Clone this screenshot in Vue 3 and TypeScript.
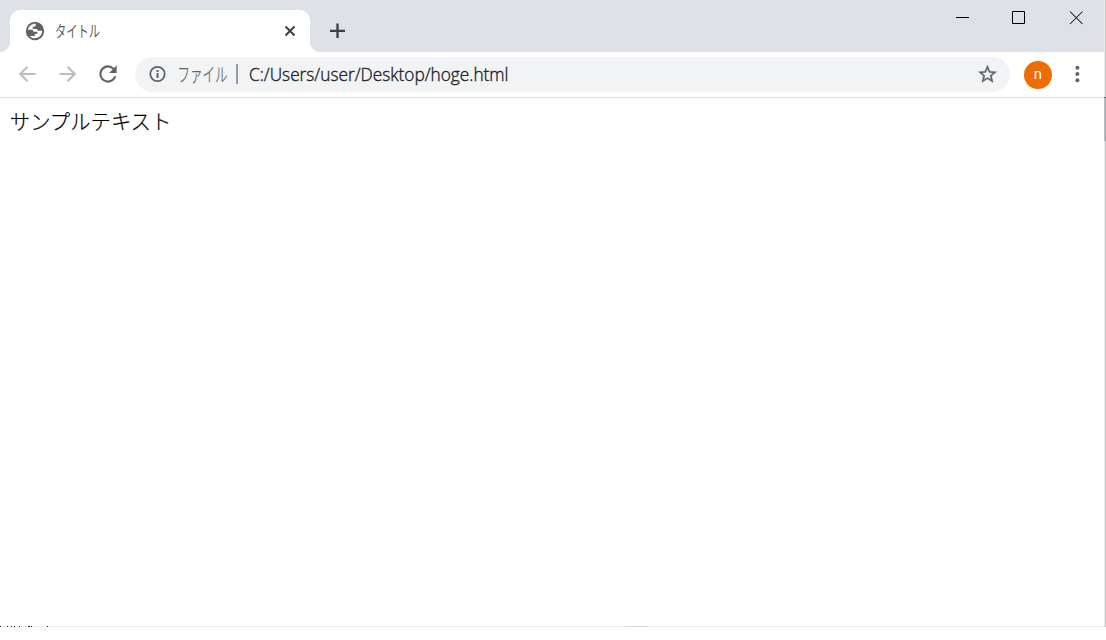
<script setup lang="ts">
const tabTitle = 'タイトル'
const scheme = 'ファイル'
const address = 'C:/Users/user/Desktop/hoge.html'
const pageText = 'サンプルテキスト'
const initial = 'n'
// Pixels of a window behind this one that show along the lower edge
const specks = [[0, 1], [7, 1], [11, 1], [14, 1], [19, 1], [28, 2], [31, 1], [47, 1]]
</script>

<template>
  <div class="window">
    <div class="frame">
      <header class="tabstrip">
        <div class="lead"></div>
        <div class="tab">
          <svg class="globe" width="22" height="22" viewBox="0 0 24 24">
            <circle cx="12" cy="12" r="10" fill="#5f6368"/>
            <path fill="#fff" d="M4.300 10.500C5 7 8.200 4 12.700 4.100V5.600c0 1-.7 1.700-1.700 1.700H9.500v1.400c0 .6.400 1 1 1h2.700c1.100 0 1.600.5 1.600 1.300v.8h5.100C19.800 16.500 16.300 19.900 12 19.900c-2.500 0-4.400-.9-5.700-2.500h4.200c1 0 1.600-.5 1.600-1.400v-.7h1.200c.9 0 1.400-.5 1.400-1.300 0-.7-.5-1.100-1.300-1.100h-2.100c-.9 0-1.300-.5-1.300-1.200 0-.7-.5-1.200-1.300-1.200z"/>
          </svg>
          <svg class="title" width="70" height="36">
            <text x="0" y="24" textLength="45" lengthAdjust="spacingAndGlyphs">{{ tabTitle }}</text>
          </svg>
          <svg class="close" width="12" height="12" viewBox="0 0 12 12">
            <path d="M1.500 1.500l9 9M10.500 1.500l-9 9" fill="none" stroke="#3c4043" stroke-width="2"/>
          </svg>
        </div>
        <div class="trail">
          <svg class="plus" width="16" height="16" viewBox="0 0 16 16">
            <path d="M8.500 .5v14.500M1 7.800h15" fill="none" stroke="#3c4043" stroke-width="2.300"/>
          </svg>
        </div>
        <svg class="controls" width="129" height="16" viewBox="0 0 129 16">
          <path d="M0 7.500h13M56.500 1.500h12v12h-12z" fill="none" stroke="#000"/>
          <path d="M114 1.500l12.500 12.500M126.500 1.500l-12.500 12.500" fill="none" stroke="#151515" stroke-width="1.050"/>
        </svg>
      </header>

      <nav class="toolbar">
        <svg class="arrows" width="58" height="18" viewBox="0 0 58 18">
          <path d="M17.500 9H2.500M9.500 1.700L2.200 9L9.500 16.300M41.500 9h15M49.500 1.700L56.800 9L49.500 16.300" fill="none" stroke="#babcbe" stroke-width="2"/>
        </svg>
        <svg class="reload" width="26" height="26" viewBox="0 0 24 24">
          <path fill="#5f6368" d="M17.650 6.350A7.960 7.960 0 0 0 12 4a8 8 0 1 0 7.730 10h-2.080A6 6 0 1 1 12 6c1.660 0 3.140.69 4.220 1.780L13 11h7V4z"/>
        </svg>
        <div class="omnibox">
          <svg class="info" width="18" height="18" viewBox="0 0 18 18">
            <circle cx="8.500" cy="9" r="7.200" fill="none" stroke="#5f6368" stroke-width="1.800"/>
            <path d="M7.500 8h2v5h-2zM7.500 5h2v2h-2z" fill="#5f6368"/>
          </svg>
          <svg class="scheme" width="51" height="35">
            <text x="-.5" y="24.500" textLength="50" lengthAdjust="spacingAndGlyphs">{{ scheme }}</text>
          </svg>
          <span class="divider"></span>
          <svg class="address" width="290" height="35">
            <text x="1" y="24" textLength="259.500" lengthAdjust="spacingAndGlyphs">{{ address }}</text>
          </svg>
          <svg class="star" width="22" height="22" viewBox="0 0 24 24">
            <path transform="translate(.5 .3)" fill="#5f6368" stroke="#5f6368" stroke-width=".3" d="M22 9.240l-7.190-.62L12 2 9.190 8.630 2 9.240l5.460 4.730L5.820 21 12 17.270 18.180 21l-1.630-7.030L22 9.240zM12 15.400l-3.760 2.270 1-4.280-3.320-2.880 4.380-.38L12 6.100l1.710 4.040 4.380.38-3.320 2.880 1 4.280L12 15.400z"/>
          </svg>
        </div>
        <div class="avatar">{{ initial }}</div>
        <svg class="menu" width="6" height="18" viewBox="0 0 6 18">
          <g fill="#5f6368"><circle cx="3.400" cy="2.700" r="2"/><circle cx="3.400" cy="9" r="2"/><circle cx="3.400" cy="15.300" r="2"/></g>
        </svg>
      </nav>

      <main class="page">
        <svg class="body-text" width="200" height="40">
          <text x=".8" y="22.500" textLength="161.500" lengthAdjust="spacingAndGlyphs">{{ pageText }}</text>
        </svg>
      </main>
      <svg class="edge" width="1104" height="1">
        <path d="M0 .5h1104" stroke="#ebebeb"/>
        <path d="M625 .5h22" stroke="#d8d8d8"/>
        <rect x="646" y="0" width="1" height="1" fill="#b8b8b8"/>
        <rect v-for="s in specks" :key="s[0]" :x="s[0]" y="0" :width="s[1]" height="1" fill="#222"/>
      </svg>
    </div>
    <div class="side"></div>
  </div>
</template>

<style>
html, body { margin: 0; background: #fff; overflow: hidden; }
</style>

<style scoped>
.window {
  display: flex;
  width: 1106px;
  height: 627px;
  font-family: "Open Sans", "Noto Sans CJK JP", sans-serif;
}
.frame { display: flex; flex-direction: column; width: 1104px; }
.side {
  width: 2px;
  background:
    linear-gradient(90deg, transparent 50%, #c8c8c8 50%) 0 0 / 2px 97px no-repeat,
    linear-gradient(#5f6368, #5f6368) 0 97px / 2px 1px no-repeat,
    linear-gradient(90deg, #b9bdc1 50%, #a5a9ad 50%) 0 98px / 2px 43px no-repeat,
    linear-gradient(90deg, #ebebeb 50%, #c6c6c6 50%);
}
.tabstrip { display: flex; height: 52px; background: #dee1e6; }
.lead {
  width: 10px;
  background: radial-gradient(circle at 0 42px, transparent 9.5px, #fff 10.5px) 0 0 / 10px 52px no-repeat;
  clip-path: inset(42px 0 0 0);
}
.lead { background: radial-gradient(circle at 0 0, transparent 9.5px, #fff 10.5px) 0 42px / 10px 10px no-repeat; }
.tab {
  display: flex;
  align-items: center;
  box-sizing: border-box;
  width: 300px;
  height: 42px;
  margin-top: 10px;
  padding: 0 14px 0 14px;
  border-radius: 10px 10px 0 0;
  background: #fff;
}
.globe { margin-right: 8.5px; }
.title text {
  font: 300 16px "Noto Sans CJK JP", sans-serif;
  fill: #3c4043;
  stroke: #3c4043;
  stroke-width: 0.25px;
}
.close { margin-left: auto; }
.trail {
  width: 52px;
  background: radial-gradient(circle at 10px 0, transparent 9.500px, #fff 10.500px) 0 42px / 10px 10px no-repeat;
}
.plus { display: block; margin: 23px 0 0 19px; }
.controls { margin: 10px 0 0 594px; }
.toolbar {
  display: flex;
  align-items: center;
  box-sizing: border-box;
  height: 46px;
  padding: 0 0 1px 18px;
  border-bottom: 1px solid #d9dadc;
  background: #fff;
}
.reload { margin: 0 14px 0 19px; }
.omnibox {
  display: flex;
  align-items: center;
  width: 875px;
  height: 35px;
  border-radius: 18px;
  background: #f1f3f4;
}
.info { margin: 0 11px 0 14px; }
.scheme { overflow: visible; }
.scheme text {
  font: 300 19px "Noto Sans CJK JP", sans-serif;
  fill: #5f6368;
  stroke: #5f6368;
  stroke-width: 0.25px;
}
.divider { width: 2px; height: 20px; margin: 0 10px 0 7px; background: #96999d; }
.address text {
  font: 300 17.5px "Open Sans", sans-serif;
  fill: #202124;
  stroke: #202124;
  stroke-width: 0.35px;
}
.star { margin: 0 12px 0 auto; }
.avatar {
  width: 28px;
  height: 28px;
  margin: 1px 0 0 14px;
  border-radius: 50%;
  background: #ef6c00;
  color: #fff;
  font: 400 15px/27px Roboto, sans-serif;
  text-align: center;
}
.menu { margin-left: 22px; }
.page { flex: 1; }
.body-text { display: block; margin: 8px 0 0 9px; }
.body-text text {
  font: 300 21px "Noto Sans CJK JP", sans-serif;
  fill: #000;
  stroke: #000;
  stroke-width: 0.2px;
}
.edge { display: block; }
</style>
